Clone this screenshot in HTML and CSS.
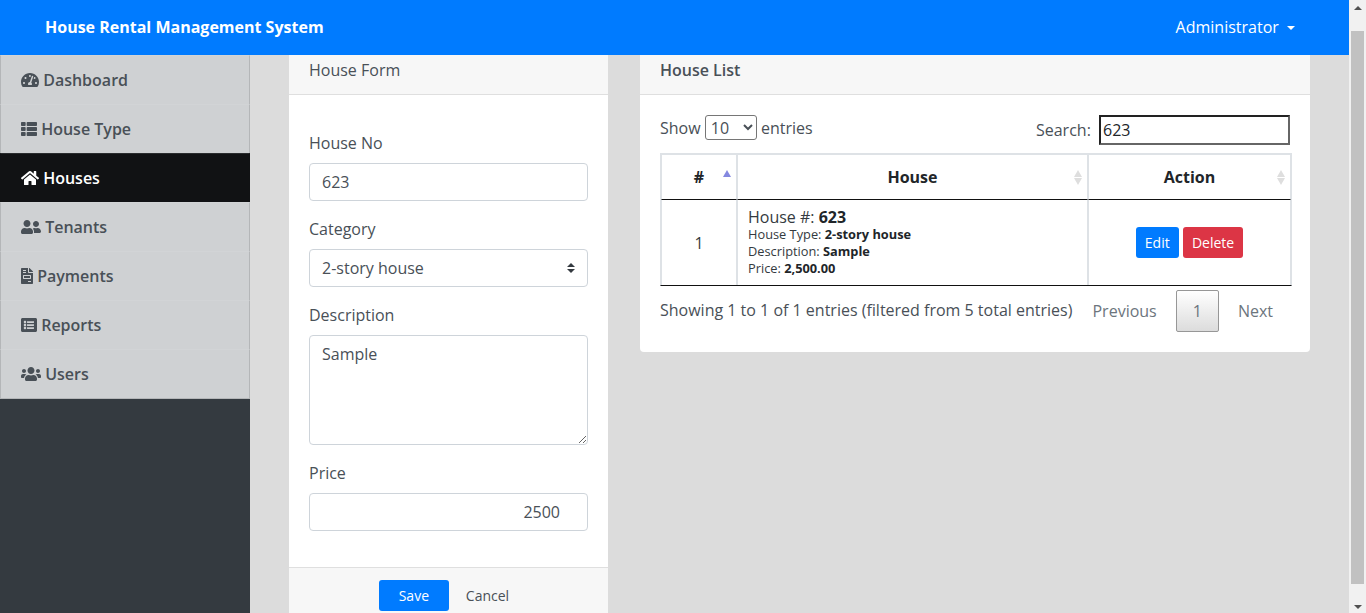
FILE: index.html
```html
<!DOCTYPE html>
<html lang="en">
<head>
    <meta charset="UTF-8">
    <meta name="viewport" content="width=device-width, initial-scale=1.0">
    <title>House Rental Management System</title>
    <link rel="stylesheet" href="styles.css">
</head>
<body>
<div class="window">
    <div class="page">
        <nav class="topbar">
            <span class="brand">House Rental Management System</span>
            <span class="account">Administrator <i class="caret"></i></span>
        </nav>

        <div class="layout">
            <aside class="sidebar">
                <a class="side-link"><svg class="icon" width="18" height="16" viewBox="0 0 576 512"><path d="M288 32C128.94 32 0 160.94 0 320c0 52.8 14.25 102.26 39.06 144.8 5.61 9.62 16.3 15.2 27.44 15.2h443c11.14 0 21.83-5.58 27.44-15.2C561.75 422.26 576 372.8 576 320c0-159.06-128.94-288-288-288zm0 64c14.71 0 26.58 10.13 30.32 23.65-1.11 2.26-2.64 4.23-3.45 6.67l-9.22 27.67c-5.13 3.49-10.97 6.01-17.64 6.01-17.67 0-32-14.33-32-32S270.33 96 288 96zM96 384c-17.67 0-32-14.33-32-32s14.33-32 32-32 32 14.33 32 32-14.33 32-32 32zm48-160c-17.67 0-32-14.33-32-32s14.33-32 32-32 32 14.33 32 32-14.33 32-32 32zm246.77-72.41l-61.33 184C343.13 347.33 352 364.54 352 384c0 11.72-3.38 22.55-8.88 32H232.88c-5.5-9.45-8.88-20.28-8.88-32 0-33.94 26.5-61.43 59.9-63.59l61.34-184.01c4.17-12.56 17.73-19.45 30.36-15.17 12.57 4.19 19.35 17.77 15.17 30.36zm14.66 57.2l15.52-46.55c3.47-1.29 7.13-2.23 11.05-2.23 17.67 0 32 14.33 32 32s-14.33 32-32 32c-11.38-.01-20.89-6.28-26.57-15.22zM480 384c-17.67 0-32-14.33-32-32s14.33-32 32-32 32 14.33 32 32-14.33 32-32 32z"/></svg> Dashboard</a>
                <a class="side-link"><svg class="icon" width="16" height="16" viewBox="0 0 512 512"><path d="M149.333 216v80c0 13.255-10.745 24-24 24H24c-13.255 0-24-10.745-24-24v-80c0-13.255 10.745-24 24-24h101.333c13.255 0 24 10.745 24 24zM0 376v80c0 13.255 10.745 24 24 24h101.333c13.255 0 24-10.745 24-24v-80c0-13.255-10.745-24-24-24H24c-13.255 0-24 10.745-24 24zM125.333 32H24C10.745 32 0 42.745 0 56v80c0 13.255 10.745 24 24 24h101.333c13.255 0 24-10.745 24-24V56c0-13.255-10.745-24-24-24zm80 448H488c13.255 0 24-10.745 24-24v-80c0-13.255-10.745-24-24-24H205.333c-13.255 0-24 10.745-24 24v80c0 13.255 10.745 24 24 24zm-24-424v80c0 13.255 10.745 24 24 24H488c13.255 0 24-10.745 24-24V56c0-13.255-10.745-24-24-24H205.333c-13.255 0-24 10.745-24 24zm24 264H488c13.255 0 24-10.745 24-24v-80c0-13.255-10.745-24-24-24H205.333c-13.255 0-24 10.745-24 24v80c0 13.255 10.745 24 24 24z"/></svg> House Type</a>
                <a class="side-link active"><svg class="icon" width="18" height="16" viewBox="0 0 576 512"><path d="M280.37 148.26L96 300.11V464a16 16 0 0 0 16 16l112.06-.29a16 16 0 0 0 15.92-16V368a16 16 0 0 1 16-16h64a16 16 0 0 1 16 16v95.64a16 16 0 0 0 16 16.05L464 480a16 16 0 0 0 16-16V300L295.67 148.26a12.19 12.19 0 0 0-15.3 0zM571.6 251.47L488 182.56V44.05a12 12 0 0 0-12-12h-56a12 12 0 0 0-12 12v72.61L318.47 43a48 48 0 0 0-61 0L4.34 251.47a12 12 0 0 0-1.6 16.9l25.5 31A12 12 0 0 0 45.15 301l235.22-193.74a12.19 12.19 0 0 1 15.3 0L530.9 301a12 12 0 0 0 16.9-1.6l25.5-31a12 12 0 0 0-1.7-16.93z"/></svg> Houses</a>
                <a class="side-link"><svg class="icon" width="20" height="16" viewBox="0 0 640 512"><path d="M192 256c61.9 0 112-50.1 112-112S253.9 32 192 32 80 82.1 80 144s50.1 112 112 112zm76.8 32h-8.3c-20.8 10-43.9 16-68.5 16s-47.6-6-68.5-16h-8.3C51.6 288 0 339.6 0 403.2V432c0 26.5 21.5 48 48 48h288c26.5 0 48-21.5 48-48v-28.8c0-63.6-51.6-115.2-115.2-115.2zM480 256c53 0 96-43 96-96s-43-96-96-96-96 43-96 96 43 96 96 96zm48 32h-3.8c-13.9 4.8-28.6 8-44.2 8s-30.3-3.2-44.2-8H432c-20.4 0-39.2 5.9-55.7 15.4 24.4 26.3 39.7 61.2 39.7 99.8v38.4c0 2.2-.5 4.3-.6 6.4H592c26.5 0 48-21.5 48-48 0-61.9-50.1-112-112-112z"/></svg> Tenants</a>
                <a class="side-link"><svg class="icon" width="12" height="16" viewBox="0 0 384 512"><path d="M288 256H96v64h192v-64zm89-151L279.1 7c-4.5-4.5-10.6-7-17-7H256v128h128v-6.1c0-6.3-2.5-12.4-7-16.9zm-153 31V0H24C10.7 0 0 10.7 0 24v464c0 13.3 10.7 24 24 24h336c13.3 0 24-10.7 24-24V160H248c-13.2 0-24-10.8-24-24zM64 72c0-4.42 3.58-8 8-8h80c4.42 0 8 3.58 8 8v16c0 4.42-3.58 8-8 8H72c-4.42 0-8-3.58-8-8V72zm0 64c0-4.42 3.58-8 8-8h80c4.42 0 8 3.58 8 8v16c0 4.42-3.58 8-8 8H72c-4.42 0-8-3.58-8-8v-16zm256 304c0 4.42-3.58 8-8 8h-80c-4.42 0-8-3.58-8-8v-16c0-4.42 3.58-8 8-8h80c4.42 0 8 3.58 8 8v16zm0-200v96c0 8.84-7.16 16-16 16H80c-8.84 0-16-7.16-16-16v-96c0-8.84 7.16-16 16-16h224c8.84 0 16 7.16 16 16z"/></svg> Payments</a>
                <a class="side-link"><svg class="icon" width="16" height="16" viewBox="0 0 512 512"><path d="M464 480H48c-26.51 0-48-21.49-48-48V80c0-26.51 21.49-48 48-48h416c26.51 0 48 21.49 48 48v352c0 26.51-21.49 48-48 48zM128 120c-22.091 0-40 17.909-40 40s17.909 40 40 40 40-17.909 40-40-17.909-40-40-40zm0 96c-22.091 0-40 17.909-40 40s17.909 40 40 40 40-17.909 40-40-17.909-40-40-40zm0 96c-22.091 0-40 17.909-40 40s17.909 40 40 40 40-17.909 40-40-17.909-40-40-40zm288-136v-32c0-6.627-5.373-12-12-12H204c-6.627 0-12 5.373-12 12v32c0 6.627 5.373 12 12 12h200c6.627 0 12-5.373 12-12zm0 96v-32c0-6.627-5.373-12-12-12H204c-6.627 0-12 5.373-12 12v32c0 6.627 5.373 12 12 12h200c6.627 0 12-5.373 12-12zm0 96v-32c0-6.627-5.373-12-12-12H204c-6.627 0-12 5.373-12 12v32c0 6.627 5.373 12 12 12h200c6.627 0 12-5.373 12-12z"/></svg> Reports</a>
                <a class="side-link"><svg class="icon" width="20" height="16" viewBox="0 0 640 512"><path d="M96 224c35.3 0 64-28.7 64-64s-28.7-64-64-64-64 28.7-64 64 28.7 64 64 64zm448 0c35.3 0 64-28.7 64-64s-28.7-64-64-64-64 28.7-64 64 28.7 64 64 64zm32 32h-64c-17.6 0-33.5 7.1-45.1 18.6 40.3 22.1 68.9 62 75.1 109.4h66c17.7 0 32-14.3 32-32v-32c0-35.3-28.7-64-64-64zm-256 0c61.9 0 112-50.1 112-112S381.9 32 320 32 208 82.1 208 144s50.1 112 112 112zm76.8 32h-8.3c-20.8 10-43.9 16-68.5 16s-47.6-6-68.5-16h-8.3C179.6 288 128 339.6 128 403.2V432c0 26.5 21.5 48 48 48h288c26.5 0 48-21.5 48-48v-28.8c0-63.6-51.6-115.2-115.2-115.2zm-223.7-13.4C161.5 263.1 145.6 256 128 256H64c-35.3 0-64 28.7-64 64v32c0 17.7 14.3 32 32 32h65.9c6.3-47.4 34.9-87.3 75.2-109.4z"/></svg> Users</a>
            </aside>

            <main class="content">
                <section class="card form-card">
                    <div class="card-header">House Form</div>
                    <form class="form-body">
                        <div class="form-group">
                            <label for="houseNo">House No</label>
                            <input class="form-control" id="houseNo" type="text" value="623">
                        </div>
                        <div class="form-group">
                            <label for="category">Category</label>
                            <select class="form-control custom-select" id="category">
                                <option>2-story house</option>
                            </select>
                        </div>
                        <div class="form-group">
                            <label for="description">Description</label>
                            <textarea class="form-control description" id="description">Sample</textarea>
                        </div>
                        <div class="form-group">
                            <label for="price">Price</label>
                            <input class="form-control price" id="price" type="number" value="2500">
                        </div>
                    </form>
                    <div class="card-footer">
                        <button class="btn btn-blue save">Save</button>
                        <button class="btn btn-plain">Cancel</button>
                    </div>
                </section>

                <section class="card list-card">
                    <div class="card-header strong">House List</div>
                    <div class="list-body">
                        <div class="table-tools">
                            <label class="length">Show
                                <select class="length-select"><option>10</option></select>
                                entries</label>
                            <label class="search">Search:
                                <input class="search-input" type="text" value="623">
                            </label>
                        </div>

                        <table class="house-table">
                            <colgroup>
                                <col class="col-num">
                                <col class="col-house">
                                <col class="col-action">
                            </colgroup>
                            <thead>
                                <tr>
                                    <th class="sort sort-asc">#</th>
                                    <th class="sort">House</th>
                                    <th class="sort">Action</th>
                                </tr>
                            </thead>
                            <tbody>
                                <tr>
                                    <td class="num">1</td>
                                    <td class="house-cell">
                                        <p class="house-title">House #: <b>623</b></p>
                                        <p class="house-line">House Type: <b>2-story house</b></p>
                                        <p class="house-line">Description: <b>Sample</b></p>
                                        <p class="house-line">Price: <b>2,500.00</b></p>
                                    </td>
                                    <td class="actions">
                                        <button class="btn btn-blue">Edit</button>
                                        <button class="btn btn-red">Delete</button>
                                    </td>
                                </tr>
                            </tbody>
                        </table>

                        <div class="table-foot">
                            <span class="info">Showing 1 to 1 of 1 entries (filtered from 5 total entries)</span>
                            <div class="pager">
                                <a class="page-btn">Previous</a>
                                <a class="page-btn current">1</a>
                                <a class="page-btn">Next</a>
                            </div>
                        </div>
                    </div>
                </section>
            </main>
        </div>
    </div>

    <div class="scrollbar">
        <i class="arrow-up"></i>
        <div class="thumb"></div>
        <i class="arrow-down"></i>
    </div>
</div>
</body>
</html>
```

FILE: styles.css
```css
* {
    box-sizing: border-box;
}

html, body {
    margin: 0;
    height: 100%;
    overflow: hidden;
}

body {
    font-family: "Open Sans", sans-serif;
    font-size: 16px;
    line-height: 24px;
    color: #495057;
    background: #dcdcdc;
}

.window {
    display: flex;
    height: 613px;
}

.page {
    flex: 1;
    min-width: 0;
    display: flex;
    flex-direction: column;
}

/* top bar */
.topbar {
    flex: none;
    height: 55px;
    display: flex;
    align-items: center;
    justify-content: space-between;
    padding: 0 54px 1px 45px;
    background: #007bff;
    color: #fff;
}
.brand {
    font-weight: 700;
}
.caret {
    display: inline-block;
    margin-left: 4px;
    vertical-align: 3px;
    border-top: 4.8px solid #fff;
    border-left: 4.8px solid transparent;
    border-right: 4.8px solid transparent;
}

.layout {
    flex: 1;
    min-height: 0;
    display: flex;
}

/* sidebar */
.sidebar {
    flex: none;
    width: 250px;
    background: #343a40;
}
.side-link {
    display: block;
    height: 49px;
    padding: 12px 20px;
    background: #cfd1d3;
    border-left: 1px solid #b4b6b8;
    border-right: 1px solid #b4b6b8;
    border-top: 1px solid #d2d4d6;
    color: #495057;
    font-weight: 600;
}
.side-link:last-child {
    height: 50px;
    border-bottom: 1px solid #b4b6b8;
}
.side-link.active {
    background: #111214;
    border-color: #2a2c2e #111214 #111214;
    color: #fff;
}
.icon {
    fill: currentColor;
    vertical-align: -2px;
}

/* main area */
.content {
    flex: 1;
    min-width: 0;
    overflow: hidden;
    display: flex;
    align-items: flex-start;
    gap: 32px;
    padding-left: 39px;
}
.card {
    flex: none;
    background: #fff;
}
.form-card {
    width: 319px;
}
.list-card {
    width: 670px;
    border-radius: 0 0 4px 4px;
}
.card-header {
    height: 40px;
    padding: 3px 20px 0;
    background: #f7f7f7;
    border-bottom: 1px solid #dfdfdf;
}
.card-header.strong {
    font-weight: 600;
}
.card-footer {
    padding: 12px 20px;
    background: #f7f7f7;
    border-top: 1px solid #dfdfdf;
    display: flex;
    justify-content: center;
    gap: 8px;
}

/* form */
.form-body {
    padding: 36px 20px;
}
.form-group {
    margin-bottom: 16px;
}
.form-group:last-child {
    margin-bottom: 0;
}
.form-group label {
    display: block;
    margin-bottom: 8px;
}
.form-control {
    display: block;
    width: 100%;
    height: 38px;
    padding: 6px 12px;
    border: 1px solid #ced4da;
    border-radius: 4px;
    background-color: #fff;
    color: #495057;
    font: inherit;
}
.custom-select {
    appearance: none;
    background-image: url("data:image/svg+xml,%3csvg xmlns='http://www.w3.org/2000/svg' width='4' height='5' viewBox='0 0 4 5'%3e%3cpath fill='%23343a40' d='M2 0L0 2h4zm0 5L0 3h4z'/%3e%3c/svg%3e");
    background-repeat: no-repeat;
    background-position: right 12px center;
    background-size: 8px 10px;
}
.description {
    height: 110px;
}
.price {
    text-align: right;
}

/* buttons */
.btn {
    height: 31px;
    padding: 0 8px;
    border: 1px solid transparent;
    border-radius: 3px;
    font-family: inherit;
    font-size: 14px;
    line-height: 21px;
    color: #fff;
}
.btn-blue {
    background: #007bff;
}
.btn-red {
    background: #dc3545;
}
.btn-plain {
    background: none;
    color: #495057;
}
.save {
    width: 70px;
}

/* house list */
.list-body {
    padding: 20px;
}
.table-tools {
    display: flex;
    justify-content: space-between;
    height: 38px;
}
.length-select {
    width: 52px;
    height: 25px;
    padding: 0 0 0 1px;
    border: 1px solid #767676;
    border-radius: 3px;
    background: #fff;
    color: #495057;
    font: inherit;
}
.search-input {
    width: 191px;
    height: 30px;
    margin-left: 4px;
    padding: 1px 2px;
    border: 2px solid;
    border-color: #222 #666 #666 #222;
    color: #212529;
    font: inherit;
    outline: none;
}

.house-table {
    width: 632px;
    table-layout: fixed;
    border-collapse: separate;
    border-spacing: 0;
    border: 1px solid #dee2e6;
    border-bottom-color: #111;
    color: #212529;
}
.col-num {
    width: 76px;
}
.col-house {
    width: 351px;
}
.col-action {
    width: 203px;
}
.house-table th {
    position: relative;
    height: 46px;
    padding: 0 18px;
    border: 1px solid #dee2e6;
    border-bottom-color: #111;
    font-weight: 700;
    text-align: center;
}
.house-table td {
    padding: 8px 10px;
    border: 1px solid #dee2e6;
    border-top: 0;
    border-bottom: 0;
    color: #343a40;
}
.num,
.actions {
    text-align: center;
}
.house-cell p {
    margin: 0;
}
.house-title {
    line-height: 18px;
}
.house-line {
    font-size: 12.8px;
    line-height: 17px;
}
.house-cell b {
    font-weight: 700;
    color: #212529;
}

/* sort arrows over the header cells */
.sort::before,
.sort::after {
    content: "";
    position: absolute;
    right: 5px;
    border-left: 4.5px solid transparent;
    border-right: 4.5px solid transparent;
}
.sort::before {
    top: 15px;
    border-bottom: 7px solid #dedede;
}
.sort::after {
    top: 23px;
    border-top: 7px solid #dedede;
}
.sort-asc::before {
    border-bottom-color: #8488e0;
}
.sort-asc::after {
    display: none;
}

.table-foot {
    display: flex;
    justify-content: space-between;
    margin-top: 4px;
}
.info {
    padding-top: 8px;
}
.pager {
    display: flex;
    gap: 2px;
}
.page-btn {
    padding: 8px 16px;
    border: 1px solid transparent;
    border-radius: 2px;
    color: #6c757d;
}
.page-btn.current {
    border-color: #979797;
    background: linear-gradient(to bottom, #fff 0%, #dcdcdc 100%);
}

/* window scrollbar */
.scrollbar {
    flex: none;
    width: 17px;
    display: flex;
    flex-direction: column;
    align-items: center;
    background: #f1f1f1;
}
.arrow-up,
.arrow-down {
    flex: none;
    border-left: 4px solid transparent;
    border-right: 4px solid transparent;
}
.arrow-up {
    margin: 6px 0 21px;
    border-bottom: 4px solid #505050;
}
.thumb {
    flex: none;
    width: 13px;
    height: 553px;
    background: #c1c1c1;
}
.arrow-down {
    margin-top: 21px;
    border-top: 4px solid #505050;
}
```
